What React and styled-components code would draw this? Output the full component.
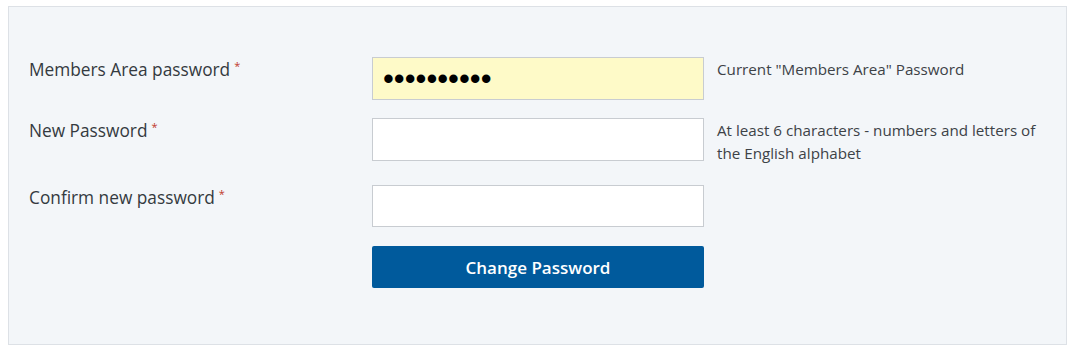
import React from 'react';
import styled, { createGlobalStyle } from 'styled-components';

const Global = createGlobalStyle`
  body {
    margin: 6px 5px 5px 8px;
    background: #ffffff;
    font-family: "Open Sans", "Liberation Sans", sans-serif;
  }
`

const Panel = styled.form`
  box-sizing: border-box;
  width: 1059px;
  height: 339px;
  background: #f3f6f9;
  border: 1px solid #dde1e6;
  padding: 50px 20px 0 20px;
`
const Row = styled.div`
  display: grid;
  grid-template-columns: 343px 332px 1fr;
  align-items: start;
  margin-bottom: ${p => p.$gap || 18}px;
`
const Label = styled.label`
  font-size: 17.3px;
  color: #343a40;
  padding-top: 2px;
  line-height: 22px;
`
const Req = styled.sup`
  color: #c0392b;
  font-size: 11px;
  margin-left: 4px;
  vertical-align: 6px;
  line-height: 0;
`
const Input = styled.input`
  box-sizing: border-box;
  width: 332px;
  height: ${p => p.$h || 43}px;
  margin: 0;
  border: 1px solid #c8ccd1;
  background: ${p => (p.$filled ? '#fefac8' : '#ffffff')};
  padding: 0 10px;
  font-family: "Liberation Sans", sans-serif;
  font-size: 31px;
  color: #000;
  outline: none;
`
const Help = styled.div`
  font-size: 15.2px;
  line-height: 23px;
  color: #3d4247;
  padding: 1px 0 0 13px;
`
const Button = styled.button`
  box-sizing: border-box;
  width: 332px;
  height: 42px;
  border: none;
  border-radius: 2px;
  background: #005a9c;
  color: #ffffff;
  font-family: "Open Sans", "Liberation Sans", sans-serif;
  font-size: 17px;
  font-weight: 600;
  cursor: pointer;
`

const Field = ({ label, help, filled, value, h, gap }) => (
  <Row $gap={gap}>
    <Label>{label}<Req>*</Req></Label>
    <Input type="password" $filled={filled} $h={h} defaultValue={value} readOnly />
    <Help>{help}</Help>
  </Row>
)

export default function App() {
  return (
    <>
      <Global />
      <Panel onSubmit={e => e.preventDefault()}>
        <Field label="Members Area password" filled value="abcdefghij" help={'Current "Members Area" Password'} />
        <Field label="New Password" help="At least 6 characters - numbers and letters of the English alphabet" gap={20} />
        <Field label="Confirm new password" h={42} gap={19} />
        <Row>
          <span />
          <Button type="submit">Change Password</Button>
        </Row>
      </Panel>
    </>
  );
}
